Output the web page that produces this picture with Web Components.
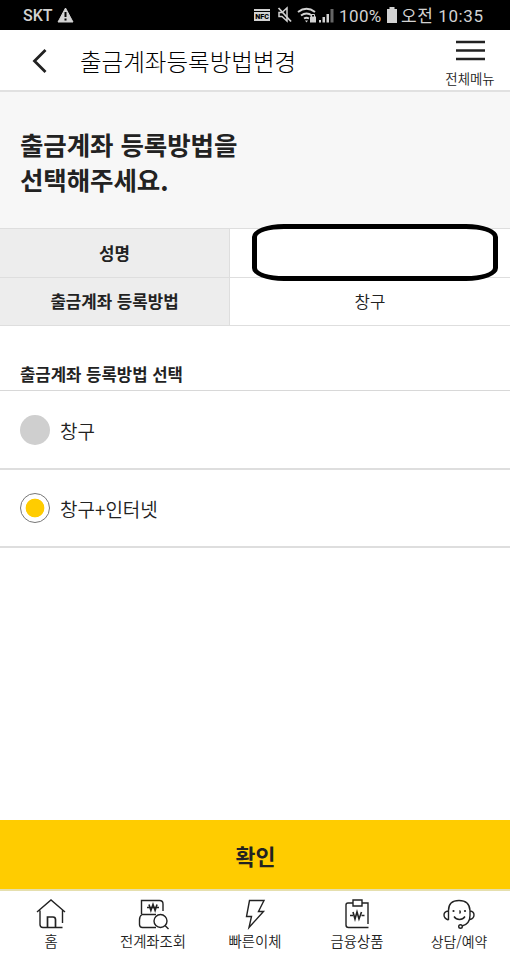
<!DOCTYPE html>
<html lang="ko">
<head>
<meta charset="utf-8">
<title>출금계좌등록방법변경</title>
<style>
    html, body {
        margin: 0;
        height: 100%;
        background: #fff;
    }

    body {
        font-family: "Noto Sans CJK KR", "Noto Sans", sans-serif;
        color: #222;
        overflow: hidden;
    }
</style>
</head>
<body>
<bank-app></bank-app>

<script>
class BankElement extends HTMLElement {

    static template(attr) {
        return ``;
    }

    constructor() {
        super();
        this.root = this.attachShadow({ mode: 'open' });
        this.root.innerHTML = this.constructor.template(this);
    }

}

const icons = {
    home: `
        <path d="M3 14 17 2 31 14M6 12.500V26.500q0 3 3 3H28.500M28.500 12V25"/>
        <path d="M13.500 29.500V19H19q2.500 0 2.500 2.500V29.500" stroke-width="1.700"/>`,
    account: `
        <path d="M5.500 16V2.500H23.500q3.500 0 3.500 3.500V13M20 16.500H6Q3.500 18 3.500 22V26.500q0 3 3 3H20"/>
        <circle cx="24.500" cy="23" r="6.500"/>
        <path d="M29 27.500 32.500 31"/>
        <path d="M11 9.500H23M13 6.500l1.900 6 2.100-6 2.100 6 1.900-6" stroke-width="1.600"/>`,
    transfer: `
        <path d="M11.500 2.500H26L20.500 13.500H25.500L11 29.500 13.500 18.500H8.500Z"/>`,
    product: `
        <path d="M12.500 5H8Q6 5 6 7V27Q6 29.500 8.500 29.500H28.500M22.500 5H28V26M13 8V2H22V8Z"/>
        <path d="M10 17.500h3M21.500 17.500h3M13 14l2 7 2-7 2 7 2.500-7" stroke-width="1.600"/>`,
    consult: `
        <path d="M6.500 22V12.500Q6.500 2.500 17 2.500T28 12.500V17.500Q28 26 20 28M6.500 13Q2 13.500 2 17T6.500 22M28 13Q32 13.500 32 17T28 21.500"/>
        <path d="M12 18.500q2 3 5.500 3t5.500-3M17.500 12.500q1.500 1.500 0 3"/>
        <circle cx="18.500" cy="28.500" r="1.800"/>
        <g fill="currentColor" stroke="none"><circle cx="11.500" cy="13" r="1.100"/><circle cx="23" cy="13" r="1.100"/></g>`
};

class StatusBar extends BankElement {

    static template() {
        return `
            <style>
                :host {
                    display: flex;
                    align-items: center;
                    height: 30px;
                    padding: 0 26px 0 23px;
                    background: #000;
                    color: #d2d2d2;
                    font: 17px/30px Roboto, "Noto Sans CJK KR", sans-serif;
                    white-space: nowrap;
                }

                svg {
                    display: block;
                    flex: none;
                }

                .carrier {
                    width: 34px;
                    font: 500 16px/30px Roboto, sans-serif;
                    padding-top: 2px;
                }

                .right {
                    display: flex;
                    align-items: center;
                    margin-left: auto;
                }

                .percent {
                    width: 47px;
                    letter-spacing: 0.4px;
                    padding-top: 1px;
                }

                .clock {
                    width: 83px;
                    letter-spacing: 0.6px;
                    padding-top: 1px;
                }
            </style>
            <span class="carrier">SKT</span>
            <svg width="17" height="16" viewBox="0 0 17 16"><path d="M8.500 1 16 15H1Z" fill="#d2d2d2" stroke="#d2d2d2" stroke-linejoin="round"/><path d="M8.500 5v5M8.500 11.500v2" stroke="#000" stroke-width="2"/></svg>
            <div class="right">
                <svg width="85" height="22" viewBox="0 0 85 22">
                    <g fill="#d2d2d2">
                        <path d="M0 5h16v2H0zM0 8h16v9H0z"/>
                        <text x="1.300" y="15.200" font-family="Roboto" font-weight="900" font-size="7.200" fill="#000">NFC</text>
                        <path d="M25 8.500h3l5-4.500v13l-5-4.500h-3z" fill="none" stroke="#d2d2d2" stroke-width="1.500"/>
                        <path d="M24.500 4 37 17.500" fill="none" stroke="#d2d2d2" stroke-width="1.800"/>
                        <path d="M44 8q8.500-6.500 17 0M47 11.500q5.500-4 11 0M50 14.500q2.500-1.500 5 0" fill="none" stroke="#d2d2d2" stroke-width="2"/>
                        <path d="M51 16.500h3l-1.500 2z"/>
                        <path d="M56 12.500h6v6h-6z"/><path d="M57.500 13v-2.500h3v2.500" fill="none" stroke="#d2d2d2"/>
                        <path d="M65 16h2v2.500h-2zM68.500 13h2.500v5.500h-2.500zM72.500 10h2.500v8.500h-2.500z"/>
                        <path d="M76.500 5h3v13.500h-3z" fill="#666"/>
                    </g>
                </svg>
                <span class="percent">100%</span>
                <svg width="15" height="18" viewBox="0 0 15 18"><path d="M3.500 1h5v2h2.500v14H1V3h2.500z" fill="#d2d2d2"/></svg>
                <span class="clock">오전 10:35</span>
            </div>
        `;
    }

}

class AppHeader extends BankElement {

    static template() {
        return `
            <style>
                :host {
                    display: flex;
                    box-sizing: border-box;
                    height: 62px;
                    padding-left: 31px;
                    background: #fff;
                    border-bottom: 2px solid #e1e1e1;
                }

                .back {
                    width: 49px;
                    padding-top: 18px;
                }

                .title {
                    flex: 1;
                    font-size: 23.5px;
                    font-weight: 300;
                    line-height: 60px;
                    padding-top: 1px;
                    color: #000;
                }

                .menu {
                    width: 80px;
                    display: flex;
                    flex-direction: column;
                    align-items: center;
                    font-size: 13.4px;
                    font-weight: 350;
                    line-height: 20px;
                }

                .bars {
                    margin: 10px 0 6px;
                }

                svg {
                    display: block;
                }
            </style>
            <div class="back">
                <svg width="18" height="26" viewBox="0 0 18 26"><path d="M14.500 2 3.500 13 14.500 24" fill="none" stroke="#222" stroke-width="2.800"/></svg>
            </div>
            <div class="title"><slot></slot></div>
            <div class="menu">
                <svg class="bars" width="29" height="22" viewBox="0 0 29 22"><path d="M0 2h29M0 10.500h29M0 19h29" stroke="#222" stroke-width="2.500"/></svg>
                <span>전체메뉴</span>
            </div>
        `;
    }

}

class PageIntro extends BankElement {

    static template() {
        return `
            <style>
                :host {
                    display: block;
                    box-sizing: border-box;
                    height: 136px;
                    padding: 34px 20px 0;
                    background: #f7f7f7;
                    font-size: 25.5px;
                    font-weight: 700;
                    line-height: 35px;
                    letter-spacing: -0.1px;
                }
            </style>
            <slot></slot>
        `;
    }

}

class InfoRow extends BankElement {

    static template(attr) {
        return `
            <style>
                :host {
                    display: grid;
                    grid-template-columns: 230px 1fr;
                    box-sizing: border-box;
                    height: 49px;
                    font-size: 16.8px;
                    line-height: 48px;
                    text-align: center;
                    border-top: 1px solid #dedede;
                }

                :host(:last-child) {
                    height: 48px;
                    line-height: 47px;
                }

                .label {
                    background: #ededed;
                    border-right: 1px solid #dedede;
                    font-weight: 700;
                }

                .value {
                    position: relative;
                    font-weight: 350;
                }
            </style>
            <div class="label">${attr.getAttribute('label')}</div>
            <div class="value"><slot></slot></div>
        `;
    }

}

class MaskBox extends BankElement {

    static template() {
        return `
            <style>
                :host {
                    position: absolute;
                    left: 22px;
                    top: -5px;
                    width: 246px;
                    height: 57px;
                    box-sizing: border-box;
                    border: 5px solid #000;
                    border-radius: 32px / 13px;
                    background: #fff;
                }
            </style>
        `;
    }

}

class RadioRow extends BankElement {

    static template() {
        return `
            <style>
                :host {
                    display: flex;
                    align-items: center;
                    box-sizing: border-box;
                    height: 78px;
                    padding-left: 20px;
                    border-bottom: 2px solid #dedede;
                    font-size: 19px;
                    font-weight: 350;
                }

                :host(.first) {
                    height: 79px;
                }

                .dot {
                    box-sizing: border-box;
                    width: 30px;
                    height: 30px;
                    margin-right: 10px;
                    border-radius: 50%;
                    background: #cfcfcf;
                }

                :host([checked]) .dot {
                    border: 1px solid #777;
                    background: radial-gradient(circle, #ffcc00 9px, #fff 9.700px);
                }

                .text {
                    padding-top: 1px;
                }
            </style>
            <span class="dot"></span>
            <span class="text"><slot></slot></span>
        `;
    }

}

class ConfirmButton extends BankElement {

    static template() {
        return `
            <style>
                :host {
                    display: block;
                    margin-top: auto;
                    height: 69px;
                    background: #ffcc00;
                    border-bottom: 2px solid #e5dfae;
                    font-size: 21.7px;
                    font-weight: 700;
                    line-height: 71px;
                    text-align: center;
                    text-indent: 1px;
                }
            </style>
            <slot></slot>
        `;
    }

}

class NavItem extends BankElement {

    static template(attr) {
        return `
            <style>
                :host {
                    display: flex;
                    flex-direction: column;
                    align-items: center;
                    padding-top: 7px;
                    font-size: 14.4px;
                    font-weight: 350;
                    line-height: 20px;
                    white-space: nowrap;
                }

                svg {
                    display: block;
                    width: 34px;
                    height: 32px;
                    margin-bottom: 1px;
                    fill: none;
                    stroke: currentColor;
                    stroke-width: 1.4;
                }
            </style>
            <svg viewBox="0 0 34 32">${icons[attr.getAttribute('icon')]}</svg>
            <slot></slot>
        `;
    }

}

class NavBar extends BankElement {

    static template() {
        return `
            <style>
                :host {
                    display: grid;
                    grid-template-columns: repeat(5, 102px);
                    height: 69px;
                    background: #fff;
                }
            </style>
            <slot></slot>
        `;
    }

}

class BankApp extends BankElement {

    static template() {
        return `
            <style>
                :host {
                    display: flex;
                    flex-direction: column;
                    height: 960px;
                    width: 510px;
                }

                .info {
                    border-bottom: 1px solid #dedede;
                }

                h2 {
                    box-sizing: border-box;
                    height: 65px;
                    margin: 0;
                    padding: 36px 20px 0;
                    border-bottom: 1px solid #d8d8d8;
                    font-size: 16.7px;
                    font-weight: 700;
                    line-height: 25px;
                }
            </style>
            <status-bar></status-bar>
            <app-header>출금계좌등록방법변경</app-header>
            <page-intro>출금계좌 등록방법을<br>선택해주세요.</page-intro>
            <div class="info">
                <info-row label="성명"><mask-box></mask-box></info-row>
                <info-row label="출금계좌 등록방법">창구</info-row>
            </div>
            <h2>출금계좌 등록방법 선택</h2>
            <radio-row class="first">창구</radio-row>
            <radio-row checked>창구+인터넷</radio-row>
            <confirm-button>확인</confirm-button>
            <nav-bar>
                <nav-item icon="home">홈</nav-item>
                <nav-item icon="account">전계좌조회</nav-item>
                <nav-item icon="transfer">빠른이체</nav-item>
                <nav-item icon="product">금융상품</nav-item>
                <nav-item icon="consult" style="font-size: 13.9px">상담/예약</nav-item>
            </nav-bar>
        `;
    }

}

customElements.define('status-bar', StatusBar);
customElements.define('app-header', AppHeader);
customElements.define('page-intro', PageIntro);
customElements.define('mask-box', MaskBox);
customElements.define('info-row', InfoRow);
customElements.define('radio-row', RadioRow);
customElements.define('confirm-button', ConfirmButton);
customElements.define('nav-item', NavItem);
customElements.define('nav-bar', NavBar);
customElements.define('bank-app', BankApp);
</script>
</body>
</html>
